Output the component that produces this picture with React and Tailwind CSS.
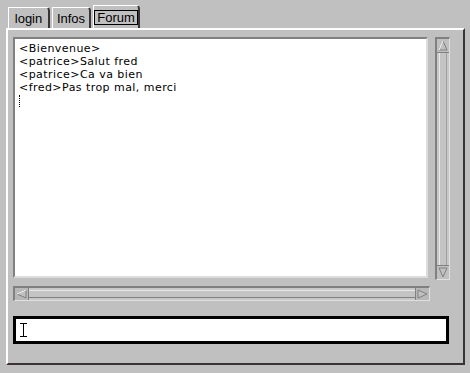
import React from "react";

const font = { fontFamily: '"Liberation Sans", Arial, sans-serif' };
const mono = { fontFamily: '"DejaVu Sans", "Liberation Sans", sans-serif' };

function Arrow({ dir }) {
  const pts = {
    up: "5,1 9,10 1,10",
    down: "1,1 9,1 5,10",
    left: "1,5 10,1 10,9",
    right: "1,1 10,5 1,9",
  }[dir];
  return (
    <svg width="11" height="11" viewBox="0 0 11 11">
      <polygon points={pts} fill="#c0c0c0" stroke="#808080" strokeWidth="1" />
      {dir === "up" && <line x1="5" y1="1" x2="1" y2="10" stroke="#ffffff" />}
      {dir === "left" && <line x1="1" y1="5" x2="10" y2="1" stroke="#ffffff" />}
    </svg>
  );
}

function Tab({ label, active, width }) {
  return (
    <div
      className={`flex items-center justify-center border-l border-t border-white border-r-2 border-r-[#3c3434] rounded-tr-[4px] bg-[#c0c0c0] ${
        active ? "h-[23px]" : "h-[21px]"
      }`}
      style={{ width }}
    >
      <span
        className={`text-[13px] leading-[13px] text-black px-[1px] ${
          active ? "border border-black px-[2px] py-[0px]" : ""
        }`}
      >
        {label}
      </span>
    </div>
  );
}

export default function App() {
  const lines = [
    "<Bienvenue>",
    "<patrice>Salut fred",
    "<patrice>Ca va bien",
    "<fred>Pas trop mal, merci",
  ];

  return (
    <div className="w-[470px] h-[373px] bg-[#c0c0c0] pt-[5px]" style={font}>
      {/* onglets */}
      <div className="flex items-end gap-[2px] pl-[8px] h-[23px]">
        <Tab label="login" width={42} />
        <Tab label="Infos" width={39} />
        <Tab label="Forum" width={47} active />
      </div>

      {/* panneau */}
      <div className="ml-[6px] w-[459px] h-[337px] border-t-2 border-l-2 border-white border-r-2 border-b-2 border-r-[#3c3434] border-b-[#3c3434] pl-[5px] pt-[7px]">
        <div className="flex gap-[7px]">
          <div
            className="w-[415px] h-[241px] bg-white border-2 border-t-[#808080] border-l-[#808080] border-b-[#dcdcdc] border-r-[#dcdcdc] pl-[4px] pt-[3px]"
            style={mono}
          >
            {lines.map((l) => (
              <div key={l} className="text-[11px] leading-[13px] tracking-[0.45px] text-black whitespace-pre">
                {l}
              </div>
            ))}
            <div className="w-[1px] h-[12px] mt-[1px] border-l border-dotted border-black" />
          </div>

          {/* barre verticale */}
          <div className="w-[15px] h-[243px] flex flex-col border-l-2 border-t-2 border-[#808080] border-r border-b border-r-[#e0e0e0] border-b-[#e0e0e0] bg-[#c8c8c8]">
            <div className="h-[14px] flex items-center justify-center bg-[#c0c0c0] border-b border-[#808080]">
              <Arrow dir="up" />
            </div>
            <div className="flex-1 mx-[2px] border-l border-[#e8e8e8] border-r border-r-[#a0a0a0] bg-[#c4c4c4]" />
            <div className="h-[14px] flex items-center justify-center bg-[#c0c0c0] border-t border-[#808080]">
              <Arrow dir="down" />
            </div>
          </div>
        </div>

        {/* barre horizontale */}
        <div className="mt-[6px] w-[417px] h-[15px] flex border-l-2 border-t-2 border-[#808080] border-r border-b border-r-[#e0e0e0] border-b-[#e0e0e0] bg-[#c8c8c8]">
          <div className="w-[14px] flex items-center justify-center bg-[#b8b8b8] border-r border-[#808080]">
            <Arrow dir="left" />
          </div>
          <div className="flex-1 my-[2px] border-t border-[#e8e8e8] border-b border-b-[#808080] bg-[#c4c4c4]" />
          <div className="w-[14px] flex items-center justify-center bg-[#b8b8b8] border-l border-[#808080]">
            <Arrow dir="right" />
          </div>
        </div>

        {/* saisie */}
        <div className="mt-[15px] w-[436px] h-[28px] bg-white border-[3px] border-black flex items-center pl-[4px]">
          <svg width="7" height="14" viewBox="0 0 7 14">
            <path d="M0 0.5 H7 M3.5 0.5 V13.5 M0 13.5 H7" stroke="#000" strokeWidth="1" fill="none" />
          </svg>
        </div>
      </div>
    </div>
  );
}
